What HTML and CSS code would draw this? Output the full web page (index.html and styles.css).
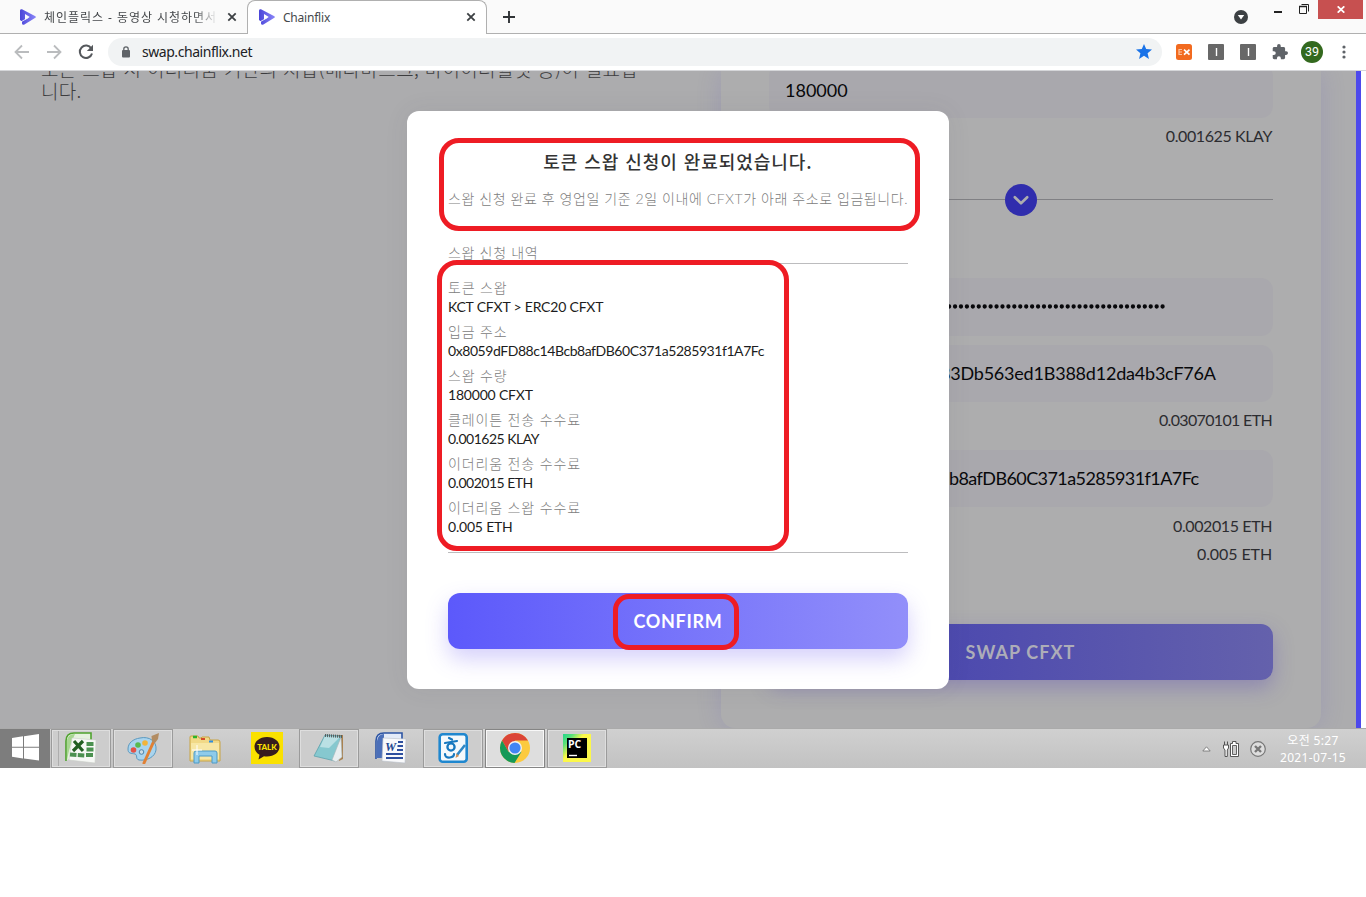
FILE: index.html
```html
<!DOCTYPE html>
<html lang="ko">
<head>
<meta charset="utf-8">
<title>Chainflix</title>
<link rel="stylesheet" href="styles.css">
</head>
<body>
<svg width="0" height="0" class="defs">
  <defs>
    <linearGradient id="play" x1="0" x2="1"><stop offset="0" stop-color="#4a45d8"/><stop offset="1" stop-color="#8a86f8"/></linearGradient>
    <symbol id="logo" viewBox="0 0 16 16"><path fill="url(#play)" fill-rule="evenodd" d="M0 1.500Q.3-.3 2 .3L15.400 7.200Q16.300 8 15.400 8.800L4 15.700Q2.300 16.300 2 14.500V12.500L0 11ZM5 5V10.800L9.800 8Z"/><path d="M1 12.800L8.500 8.600" stroke="#fff" stroke-width=".8"/></symbol>
    <symbol id="close" viewBox="0 0 10 10"><path d="M1.300 1.300L8.700 8.700M8.700 1.300L1.300 8.700" stroke="#3c4043" stroke-width="1.800"/></symbol>
  </defs>
</svg>
<div class="desktop">
  <header class="tabstrip">
    <div class="tab tab-back">
      <svg class="logo"><use href="#logo"/></svg>
      <span class="tab-title fade">체인플릭스 - 동영상 시청하면서</span>
      <svg class="x"><use href="#close"/></svg>
    </div>
    <div class="tab tab-active">
      <svg class="logo"><use href="#logo"/></svg>
      <span class="tab-title">Chainflix</span>
      <svg class="x"><use href="#close"/></svg>
    </div>
    <svg class="plus" viewBox="0 0 12 12"><path d="M6 0V12M0 6H12" stroke="#303336" stroke-width="1.900"/></svg>
    <div class="window-controls">
      <svg class="down" viewBox="0 0 14 14"><circle cx="7" cy="7" r="7" fill="#3c4043"/><path d="M3.800 5H10.200L7 9.500Z" fill="#fff"/></svg>
      <svg class="min" viewBox="0 0 8 2"><path d="M0 1H8" stroke="#222" stroke-width="2"/></svg>
      <svg class="restore" viewBox="0 0 10 10"><path d="M.5 2.500H7.500V9.500H.5ZM2.500 .5H9.500V7.500" fill="none" stroke="#222"/><path d="M0 2.500H8" stroke="#222" stroke-width="1.500"/></svg>
      <div class="win-close"><svg viewBox="0 0 8 7"><path d="M.7 .3L7.300 6.700M7.300 .3L.7 6.700" stroke="#fff" stroke-width="1.700"/></svg></div>
    </div>
  </header>
  <nav class="toolbar">
    <svg class="nav" viewBox="0 0 16 16"><path d="M15 8H2M8 1.500L1.500 8L8 14.500" fill="none" stroke="#babcbe" stroke-width="1.800"/></svg>
    <svg class="nav" viewBox="0 0 16 16"><path d="M1 8H14M8 1.500L14.500 8L8 14.500" fill="none" stroke="#babcbe" stroke-width="1.800"/></svg>
    <svg class="nav" viewBox="0 0 16 16"><path d="M13.300 4.500A6.200 6.200 0 1 0 14 9.500" fill="none" stroke="#55585c" stroke-width="2"/><path d="M15 .8V7H8.800Z" fill="#55585c"/></svg>
    <div class="address">
      <svg class="lock" viewBox="0 0 8 12"><rect y="4" width="8" height="7.500" rx="1" fill="#5f6368"/><path d="M1.800 5V3A2.200 2.200 0 0 1 6.200 3V5" fill="none" stroke="#5f6368" stroke-width="1.300"/></svg>
      <span class="url">swap.chainflix.net</span>
      <svg class="star" viewBox="0 0 24 24"><path fill="#1a73e8" d="M12 17.800L19.400 22.500L17.400 13.900L24 8.200L15.300 7.500L12 0L8.700 7.500L0 8.200L6.600 13.900L4.600 22.500Z"/></svg>
    </div>
    <svg class="ext" viewBox="0 0 16 16"><rect width="16" height="16" rx="2.500" fill="#f26a1f"/><path d="M2.500 5.500H6M2.500 8H6M2.500 10.500H6M3 5V11" stroke="#fbc4a0" stroke-width="1.200"/><path d="M8 5.700L13.500 10.700M13.500 5.700L8 10.700" stroke="#fff" stroke-width="1.700"/></svg>
    <svg class="ext" viewBox="0 0 16 16"><rect width="16" height="16" rx="1" fill="#686868"/><path d="M8.500 4V12" stroke="#fff" stroke-width="1.400"/></svg>
    <svg class="ext" viewBox="0 0 16 16"><rect width="16" height="16" rx="1" fill="#686868"/><path d="M8.500 4V12" stroke="#fff" stroke-width="1.400"/></svg>
    <svg class="puzzle" viewBox="1 1 22 22"><path fill="#5f6368" d="M20.500 11H19V7c0-1.100-.9-2-2-2h-4V3.500a2.500 2.500 0 0 0-5 0V5H4c-1.100 0-2 .9-2 2v3.800h1.500a2.700 2.700 0 0 1 0 5.400H2V20c0 1.100.9 2 2 2h3.800v-1.500a2.700 2.700 0 0 1 5.400 0V22H17c1.100 0 2-.9 2-2v-4h1.500a2.500 2.500 0 0 0 0-5z"/></svg>
    <div class="avatar">39</div>
    <svg class="more" viewBox="0 0 4 14"><g fill="#5f6368"><circle cx="2" cy="2" r="1.600"/><circle cx="2" cy="7" r="1.600"/><circle cx="2" cy="12" r="1.600"/></g></svg>
  </nav>
  <main class="page">
    <p class="intro">토큰 스왑 시 이더리움 기반의 지갑(메타마스크, 마이이더월렛 등)이 필요합<br>니다.</p>
    <section class="card">
      <div class="field field-first">180000</div>
      <div class="fee fee-first">0.001625 KLAY</div>
      <div class="separator"><svg viewBox="0 0 32 32"><circle cx="16" cy="16" r="16" fill="#302dad"/><path d="M9.800 13.200L16 19.300L22.200 13.200" fill="none" stroke="#adadaf" stroke-width="2.600" stroke-linecap="round" stroke-linejoin="round"/></svg></div>
      <div class="field field-key"><svg class="dots" viewBox="0 0 380 6"><path d="M4 3H379.500" stroke="#08080b" stroke-width="4.300" stroke-linecap="round" stroke-dasharray="0 5.930"/></svg></div>
      <div class="field tail-a">83Db563ed1B388d12da4b3cF76A</div>
      <div class="fee fee-wide">0.03070101 ETH</div>
      <div class="field tail-b">b8afDB60C371a5285931f1A7Fc</div>
      <div class="fee">0.002015 ETH</div>
      <div class="fee fee-next">0.005 ETH</div>
      <div class="swap-button">SWAP CFXT</div>
    </section>
    <div class="scrollbar"></div>
    <section class="modal">
      <h1 class="title">토큰 스왑 신청이 완료되었습니다.</h1>
      <p class="notice">스왑 신청 완료 후 영업일 기준 2일 이내에 CFXT가 아래 주소로 입금됩니다.</p>
      <h2 class="subtitle">스왑 신청 내역</h2>
      <dl class="details">
        <dt>토큰 스왑</dt><dd class="pair">KCT CFXT &gt; ERC20 CFXT</dd>
        <dt>입금 주소</dt><dd class="wallet">0x8059dFD88c14Bcb8afDB60C371a5285931f1A7Fc</dd>
        <dt>스왑 수량</dt><dd class="pair">180000 CFXT</dd>
        <dt>클레이튼 전송 수수료</dt><dd class="amount">0.001625 KLAY</dd>
        <dt>이더리움 전송 수수료</dt><dd class="amount">0.002015 ETH</dd>
        <dt>이더리움 스왑 수수료</dt><dd class="pair">0.005 ETH</dd>
      </dl>
      <div class="confirm">CONFIRM</div>
    </section>
    <div class="mark mark-title"></div>
    <div class="mark mark-details"></div>
    <div class="mark mark-confirm"></div>
  </main>
  <footer class="taskbar">
    <div class="start"><svg viewBox="0 0 27 27"><path fill="#fff" d="M0 4L11 2.300V12.800H0ZM12 2.200L27 0V12.800H12ZM0 13.800H11V24.400L0 22.800ZM12 13.800H27V26.500L12 24.500Z"/></svg></div>
    <div class="task open stacked"><svg viewBox="0 0 32 32">
      <path d="M1 29V9Q1 1 9 1H26V12" fill="#e6f2df" stroke="#4fa22e" stroke-width="1.600"/><path d="M2 28V10Q2 2 10 2Q5 12 2 28Z" fill="#a7d691"/>
      <path d="M7 6L31 8L30 31L4 28Z" fill="#f6f8f5" stroke="#c9cec8" stroke-width=".6"/>
      <path d="M21.500 12H28.500M21.500 17.500H28.500M21 23H28" stroke="#4b9150" stroke-width="4"/><path d="M5 22.500L20 23.500" stroke="#4b9150" stroke-width="4" stroke-dasharray="6.500 1.300"/>
      <path d="M9 9L18 19M18 9L8 19" stroke="#225f22" stroke-width="3.200"/></svg></div>
    <div class="task open"><svg viewBox="0 0 32 32">
      <path d="M13 6C22 4 30 9 29 18C28 25 20 29 12 28C8 27 11 23 8 22C4 21 1 22 1 17C1 11 6 7 13 6Z" fill="#a9d4ee" stroke="#5b99bf"/>
      <circle cx="6.500" cy="18" r="2.800" fill="#e35247"/><circle cx="11" cy="13" r="2.800" fill="#59ba51"/><circle cx="18" cy="11" r="2.800" fill="#f2b43a"/><circle cx="14.500" cy="20" r="2.300" fill="#c9dce7" stroke="#4e85aa"/>
      <path d="M17 31L26 11" stroke="#e08034" stroke-width="3" stroke-linecap="round"/><path d="M25 10L24.500 4L32 1L31 7L28 11Z" fill="#b28c62"/></svg></div>
    <div class="task"><svg viewBox="0 0 32 32">
      <path d="M1 29V5Q1 4 2 4H9L10 6H12L13 5H20L21 8L29 8Q31 8 31 10V29Z" fill="#f1d987" stroke="#c8a445"/><path d="M4 5H8" stroke="#2bb52b" stroke-width="2.500"/><path d="M12 7H16" stroke="#d44a2b" stroke-width="2"/><path d="M20 9.500H24" stroke="#2e8fe0" stroke-width="2"/>
      <path d="M2 11H30V27H2Z" fill="#f7e7a5"/>
      <path d="M5 31V21Q5 19 7 19H26Q28 19 28 21V31H23V24H10V31Z" fill="#8ecbea" stroke="#4c9ac6"/><path d="M8 13V23M3 18H13" stroke="#fff"/></svg></div>
    <div class="task"><svg viewBox="0 0 32 32"><path d="M0 0H32V32H0Z" fill="#fae100"/><path d="M16 5C8.500 5 3.500 9.500 3.500 14.800Q3.500 20 8.500 22.800L7.500 27.500L13 24.300C22 25.500 28.500 21 28.500 14.800C28.500 9.500 23.500 5 16 5Z" fill="#371d1e"/><text x="16" y="18" text-anchor="middle" class="talk">TALK</text></svg></div>
    <div class="task open"><svg viewBox="0 0 32 32"><path d="M25 3H30V27L26 29Z" fill="#a98250"/><path d="M12 3L28 4L22 29L1 24Z" fill="#86c8cf" stroke="#539ca7" stroke-width=".7"/><path d="M12 4L27 5L16 16L7 15Z" fill="#bae0e4"/><path d="M28 5L29 25L23 30L19 28Z" fill="#e8eef0" stroke="#aab5b8" stroke-width=".6"/><path d="M12 3.500L29 4.500" stroke="#565b5c" stroke-width="3" stroke-dasharray="1 1"/></svg></div>
    <div class="task"><svg viewBox="0 0 32 32">
      <path d="M1 27V9Q1 1 9 1H27V10" fill="#e4ebf8" stroke="#2c54a3" stroke-width="1.600"/><path d="M2 26V9Q3 2 9 2V26Z" fill="#4b6fb9"/>
      <path d="M8 6L31 7L30 31L7 29Z" fill="#f8f9fb" stroke="#b9c0ca" stroke-width=".6"/><path d="M23 10H28M22.500 14H28M22 18H28M11 22H28M11 26H28" stroke="#2c4e9e" stroke-width="2"/><text x="10" y="18.500" class="word">W</text></svg></div>
    <div class="task open"><svg viewBox="0 0 32 32"><rect x="2.700" y="2.200" width="27" height="27.600" rx="3" fill="#f4f9fc" stroke="#1f87cf" stroke-width="2.600"/><path d="M12 6L15 7.500M8 11L20 9M8 22Q8 26 13 25.500Q17 25 17 22" fill="none" stroke="#1678bf" stroke-width="2.200" stroke-linecap="round"/><circle cx="14" cy="15" r="3.600" fill="none" stroke="#1678bf" stroke-width="2.300"/><path d="M20 23L28 13" stroke="#2e87c5" stroke-width="2.600"/><path d="M18.500 26L19.500 21.500L22 24Z" fill="#d18f53"/></svg></div>
    <div class="task open current"><svg viewBox="0 0 32 32"><circle cx="16" cy="16" r="15" fill="#fcca3f"/><path d="M3 8.500A15 15 0 0 1 29 8.500H16L9.500 19.800Z" fill="#db4437"/><path d="M3 8.500A15 15 0 0 0 15.500 31L22.500 19.800H9.500Z" fill="#159957"/><circle cx="16" cy="16" r="7" fill="#f1f1f1"/><circle cx="16" cy="16" r="5.600" fill="#4285f4"/></svg></div>
    <div class="task open"><svg viewBox="0 0 32 32"><defs><linearGradient id="pc" x2=".6" y2=".5"><stop stop-color="#21d789"/><stop offset=".35" stop-color="#59df7b"/><stop offset=".75" stop-color="#fcf84a"/></linearGradient></defs><path d="M2 2H30V30H2Z" fill="url(#pc)"/><path d="M6 6H26V26H6Z" fill="#000"/><text x="7" y="15.500" class="pc">PC</text><path d="M8 23.500H16" stroke="#fff" stroke-width="1.400"/></svg></div>
    <div class="tray">
      <svg class="tray-up" viewBox="0 0 9 6"><path d="M.8 5L4.500 .8L8.200 5Z" fill="#fff" stroke="#777" stroke-width=".9"/></svg>
      <svg class="tray-power" viewBox="0 0 16 16"><path d="M1.500 .5V4M4.500 .5V4M.5 4H5.500V7L4.300 9V15.500H2V9L.5 7Z" fill="#fff" stroke="#555"/><path d="M7.500 2.500H9.500V.5H13V2.500H15.500V15.500H7.500Z" fill="#fff" stroke="#555"/><path d="M9.500 4.500H13.500V13.500H9.500Z" fill="#ccc" stroke="#555" stroke-width=".9"/></svg>
      <svg class="tray-off" viewBox="0 0 16 16"><circle cx="8" cy="8" r="7.300" fill="#ddd" stroke="#777" stroke-width="1.200"/><path d="M5 5L11 11M11 5L5 11" stroke="#777" stroke-width="2.400"/></svg>
      <div class="clock">오전 5:27<br>2021-07-15</div>
    </div>
  </footer>
</div>
</body>
</html>
```
FILE: styles.css
```css
* { box-sizing: border-box; }
body { margin: 0; background: #fff; }
p, h1, h2, dl, dd { margin: 0; }
svg { display: block; flex: none; }
.defs { position: absolute; }
.desktop { width: 1366px; height: 768px; display: flex; flex-direction: column; font-family: Lato, "Noto Sans CJK KR", sans-serif; }

/* browser tabs */
.tabstrip { height: 34px; flex: none; display: flex; background: #fafafa; border-bottom: 1px solid #b0b0b0; font: 12px "Noto Sans", "Noto Sans CJK KR", sans-serif; color: #45484b; }
.tab { display: flex; align-items: center; height: 33px; }
.tab-back { width: 247px; padding-left: 20px; }
.tab-active { width: 240px; height: 34px; padding: 0 0 1px 11px; background: #fff; border: 1px solid #b0b0b0; border-bottom: 0; border-radius: 8px 8px 0 0; }
.logo { width: 16px; height: 16px; }
.tab-title { width: 174px; margin: 0 9px 0 8px; overflow: hidden; white-space: nowrap; letter-spacing: -.21px; }
.fade { letter-spacing: .95px; -webkit-mask-image: linear-gradient(90deg, #000 150px, transparent 174px); mask-image: linear-gradient(90deg, #000 150px, transparent 174px); }
.x { width: 10px; height: 10px; }
.plus { width: 12px; height: 12px; margin: 11px 0 0 16px; }
.window-controls { margin-left: auto; display: flex; }
.down { width: 14px; height: 14px; margin: 10px 26px 0 0; }
.min { width: 8px; height: 2px; margin: 11px 17px 0 0; }
.restore { width: 10px; height: 10px; margin-top: 4px; }
.win-close { width: 45px; height: 19px; background: #c75050; padding: 6px 0 0 19px; margin: 0 3px 0 9px; }
.win-close svg { width: 8px; height: 7px; }

/* browser toolbar */
.toolbar { height: 37px; flex: none; display: flex; align-items: center; padding-left: 14px; border-bottom: 1px solid #d5d6d9; background: #fff; }
.nav { width: 16px; height: 16px; margin-right: 16px; }
.address { width: 1054px; height: 28px; border-radius: 14px; background: #f1f3f4; display: flex; align-items: center; padding: 0 10px 0 14px; margin: 0 14px 0 -2px; }
.lock { width: 8px; height: 12px; margin-right: 12px; }
.url { font: 14px/18px "Noto Sans", sans-serif; letter-spacing: -.45px; color: #202124; }
.star { width: 16px; height: 16px; margin-left: auto; }
.ext { width: 16px; height: 16px; margin-right: 16px; }
.puzzle { width: 16px; height: 16px; }
.avatar { width: 22px; height: 22px; margin: 0 19px 0 13px; border-radius: 50%; background: #33691e; color: #fff; text-align: center; font: 12.5px/22px Roboto, sans-serif; }
.more { width: 4px; height: 14px; }

/* swap page */
.page { height: 657px; flex: none; position: relative; overflow: hidden; display: flex; background: #acacae; }
.intro { width: 680px; flex: none; margin: -13px 0 0 41px; font: 300 19px/22px "Noto Sans CJK KR", sans-serif; letter-spacing: .33px; color: #3d3d3f; white-space: nowrap; }
.card { width: 600px; height: 657px; padding: 0 48px; background: #adadae; border-radius: 0 0 14px 14px; box-shadow: 0 0 24px rgba(100, 90, 190, .2); }
.field { height: 57px; margin-top: 9px; padding: 0 16px; font-size: 18px; line-height: 57px; background: #a9a8ad; border-radius: 12px; color: #08080b; white-space: nowrap; }
.field-first { height: 54px; margin-top: -7px; line-height: 53px; }
.field-key { height: 58px; }
.dots { width: 380px; height: 57px; }
.tail-a { padding-left: 171px; letter-spacing: -.21px; }
.fee + .tail-b { margin-top: 16px; padding-left: 180px; letter-spacing: -.58px; }
.fee { margin-top: 5px; padding-right: 1px; text-align: right; font-size: 16px; line-height: 28px; letter-spacing: -.4px; color: #2c2c30; }
.fee-first { margin-top: 4px; }
.fee-wide { margin-top: 4px; letter-spacing: -.66px; }
.fee-next { margin-top: 0; letter-spacing: -.1px; }
.separator { display: flex; align-items: center; margin: 34px 0 62px; }
.separator::before, .separator::after { content: ""; flex: 1; height: 1px; margin-top: -1px; background: #808084; }
.separator svg { width: 32px; height: 32px; }
.swap-button, .confirm { height: 56px; border-radius: 12px; font-weight: 700; font-size: 18px; line-height: 56px; text-align: center; }
.swap-button { margin-top: 56px; padding-right: 1px; letter-spacing: 1.070px; color: #adadb8; background: linear-gradient(90deg, #403db0, #6461ac); box-shadow: 0 8px 20px rgba(85, 70, 180, .35); }
.scrollbar { width: 10px; margin-left: auto; border-left: 5px solid #4d49ec; background: #fff; }

/* completion dialog */
.modal { position: absolute; left: 407px; top: 40px; width: 542px; height: 578px; padding: 39px 41px; background: #fff; border-radius: 12px; box-shadow: 0 0 24px rgba(80, 80, 90, .08); }
.title { font: 500 18px/22px "Noto Sans CJK KR", sans-serif; letter-spacing: .95px; text-align: center; color: #333; }
.notice, .subtitle, dt { font: 300 14px/20px Lato, "Noto Sans CJK KR", sans-serif; white-space: nowrap; color: #808080; }
.notice { margin-top: 17px; letter-spacing: .565px; }
.subtitle { height: 21px; margin-top: 34px; letter-spacing: .68px; border-bottom: 1px solid #bcbcbe; }
.details { padding: 14px 0 10px; border-bottom: 1px solid #bcbcbe; }
dt { letter-spacing: .85px; }
dd { font-size: 14px; line-height: 18px; margin-bottom: 6px; color: #1c1c20; }
.pair { letter-spacing: -.2px; }
.wallet { letter-spacing: -.44px; }
.amount { letter-spacing: -.5px; }
.confirm { margin-top: 40px; letter-spacing: .7px; color: #fff; background: linear-gradient(90deg, #5c59fb, #928ffa); box-shadow: 0 10px 22px rgba(100, 80, 240, .27); }

/* hand-drawn highlights */
.mark { position: absolute; border: 5px solid #ee1c24; border-radius: 20px; }
.mark-title { left: 439px; top: 67px; width: 481px; height: 93px; }
.mark-details { left: 437px; top: 189px; width: 352px; height: 291px; }
.mark-confirm { left: 613px; top: 523px; width: 126px; height: 56px; border-radius: 16px; }

/* taskbar */
.taskbar { height: 40px; flex: none; display: flex; gap: 2px; background: linear-gradient(#d0d0d0, #c2c2c2); border-top: 1px solid #aaa; }
.start { width: 50px; height: 39px; margin-right: -1px; padding: 5px 0 0 12px; background: #7d7d7d; }
.start svg { width: 27px; height: 27px; }
.task { width: 60px; height: 39px; padding: 2px 13px; border: 1px solid transparent; }
.task svg { width: 32px; height: 32px; }
.open { border-color: #9b9b9b; box-shadow: inset 0 0 0 1px #dedede; background: #cdcdcd; }
.current { border-color: #858585; background: #dedede; box-shadow: inset 0 0 0 1px #f8f8f8; }
.stacked { background: linear-gradient(90deg, transparent 6px, #adadad 6px, #adadad 7px, transparent 7px), #cdcdcd; }
.talk { font: 900 8px Lato, sans-serif; fill: #fae100; }
.word { font: italic 700 12.500px "Liberation Serif", serif; fill: #24478f; }
.pc { font: 700 10.500px "Open Sans", sans-serif; fill: #fff; }
.tray { display: flex; align-items: center; margin-left: auto; padding-right: 19px; }
.tray-up { width: 9px; height: 6px; margin-right: 12px; }
.tray-power { width: 16px; height: 16px; margin-right: 11px; }
.tray-off { width: 16px; height: 16px; margin-right: 13px; }
.clock { width: 68px; text-align: center; font: 12px/17px "Noto Sans", "Noto Sans CJK KR", sans-serif; letter-spacing: .35px; color: #fff; }
```
